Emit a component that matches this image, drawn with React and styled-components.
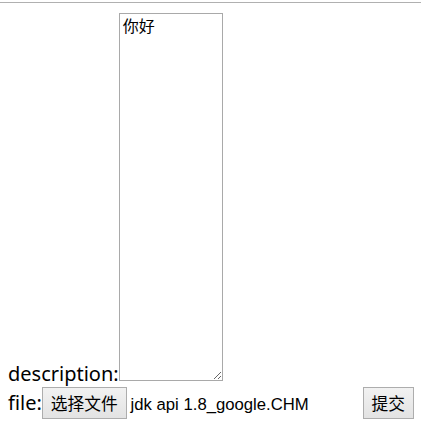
import React from "react";
import styled, { createGlobalStyle } from "styled-components";

const Global = createGlobalStyle`
  html, body { margin: 0; padding: 0; background: #fff; }
  body { font-family: "Noto Sans", "Noto Sans CJK SC", sans-serif; color: #000; }
`;

const Rule = styled.hr`
  margin: 2px 0 0 0;
  border: 0;
  border-top: 1px solid #b0b0b0;
  height: 0;
`;

const Form = styled.form`
  padding: 10px 0 0 8px;
`;

const Line = styled.div`
  font-size: 20px;
  line-height: normal;
  white-space: nowrap;
`;

const Label = styled.span`
  font-family: "Noto Sans", "Noto Sans CJK SC", sans-serif;
`;

const Area = styled.textarea`
  display: inline-block;
  vertical-align: baseline;
  box-sizing: border-box;
  width: 104px;
  height: 368px;
  margin: 0;
  padding: 2px 3px;
  border: 1px solid #a9a9a9;
  font-family: "Noto Sans CJK SC", sans-serif;
  font-size: 16px;
  line-height: 1.2;
  color: #000;
  resize: both;
  outline: none;
`;

const Btn = styled.button`
  box-sizing: border-box;
  height: 32px;
  margin: 0 0 0 ${(p) => p.$gap}px;
  padding: 0 8px;
  border: 1px solid #adadad;
  border-radius: 0;
  background: linear-gradient(#f2f2f2, #e3e3e3);
  font-family: "Noto Sans CJK SC", sans-serif;
  font-size: 16.7px;
  line-height: 20px;
  color: #000;
  vertical-align: baseline;
`;

const FileName = styled.span`
  display: inline-block;
  width: 232px;
  margin-left: 4px;
  font-family: "Liberation Sans", Arial, sans-serif;
  font-size: 16.7px;
`;

export default function App() {
  return (
    <>
      <Global />
      <Rule />
      <Form onSubmit={(e) => e.preventDefault()}>
        <Line>
          <Label>description:</Label>
          <Area defaultValue="你好" />
        </Line>
        <Line>
          <Label>file:</Label>
          <Btn type="button" $gap={0}>选择文件</Btn>
          <FileName>jdk api 1.8_google.CHM</FileName>
          <Btn type="submit" $gap={0}>提交</Btn>
        </Line>
      </Form>
    </>
  );
}
